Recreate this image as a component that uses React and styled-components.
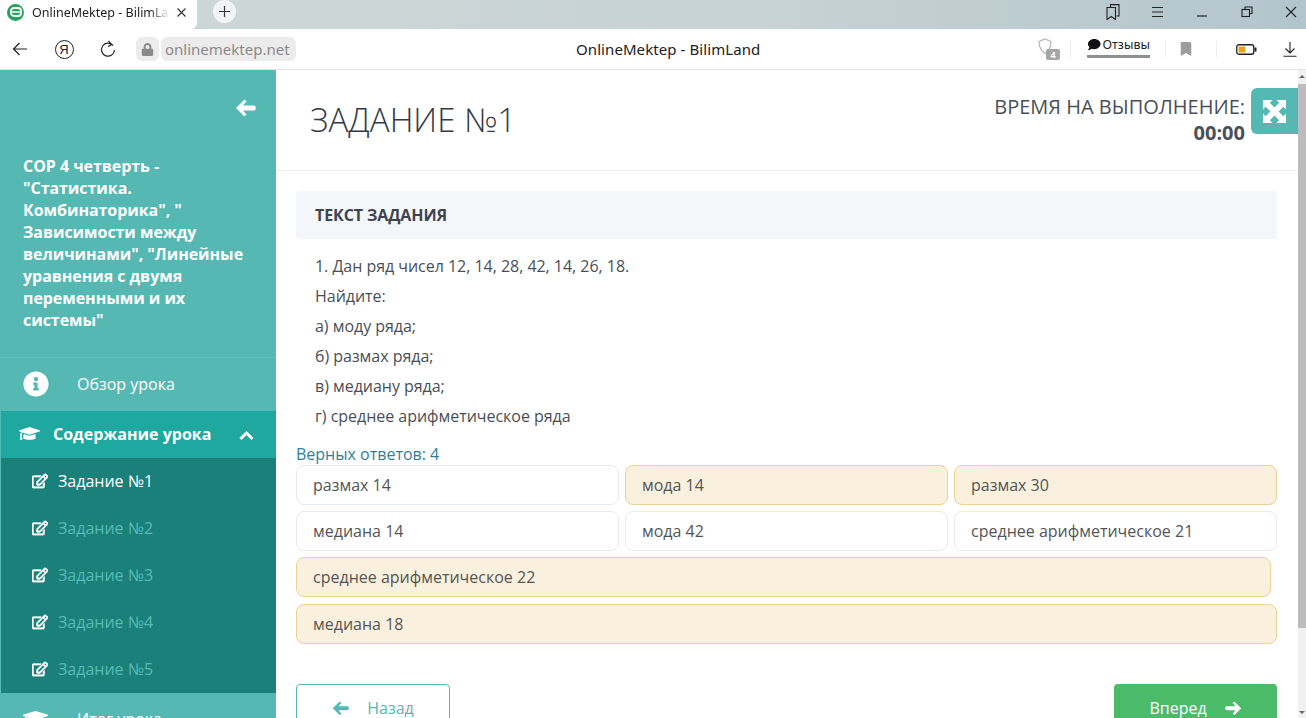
import React from 'react'
import styled, { createGlobalStyle } from 'styled-components'
import {
    FaChevronUp,
    FaGraduationCap,
    FaInfoCircle,
    FaLock,
    FaBookmark,
    FaRegEdit,
    FaComment
} from 'react-icons/fa'

const GlobalStyle = createGlobalStyle`
    html, body {
        margin: 0;
        padding: 0;
        height: 718px;
        overflow: hidden;
        background: #fff;
        font-family: "Open Sans", "Noto Sans", sans-serif;
    }
    * {
        box-sizing: border-box;
    }
`

const tasks = ['Задание №1', 'Задание №2', 'Задание №3', 'Задание №4', 'Задание №5']

const lines = [
    '1. Дан ряд чисел 12, 14, 28, 42, 14, 26, 18.',
    'Найдите:',
    'а) моду ряда;',
    'б) размах ряда;',
    'в) медиану ряда;',
    'г) среднее арифметическое ряда'
]

const answers = [
    { text: 'размах 14' },
    { text: 'мода 14', picked: true },
    { text: 'размах 30', picked: true },
    { text: 'медиана 14' },
    { text: 'мода 42' },
    { text: 'среднее арифметическое 21' },
    { text: 'среднее арифметическое 22', picked: true, wide: true, short: true },
    { text: 'медиана 18', picked: true, wide: true, low: true }
]

// heavy arrow, the Font Awesome 5 one is too thin next to the reference
const BoldArrow = ({ size, right }) => (
    <svg width={size} height={size * 0.86} viewBox="0 0 21 18" style={right ? { transform: 'scaleX(-1)' } : undefined}>
        <path d="M9.500 0.500L11.500 2.500 L8 6.500 H19 Q20.800 6.500 20.800 9 Q20.800 11.500 19 11.500 H8 L11.500 15.500 L9.500 17.500 L1 9z" fill="currentColor" />
    </svg>
)

const ExpandIcon = () => (
    <svg width="23" height="23" viewBox="0 0 23 23" fill="currentColor">
        <path d="M0 0h9.500L6.800 2.700 11.500 7.400 16.200 2.700 13.500 0H23v9.500L20.300 6.800 15.600 11.500 20.300 16.200 23 13.500V23h-9.500l2.700-2.700-4.700-4.700-4.700 4.700L9.500 23H0v-9.500l2.700 2.700 4.700-4.700-4.700-4.700L0 9.500z" />
    </svg>
)

const App = () => {
    return (
        <Page>
            <GlobalStyle />
            <TabBar>
                <Tab>
                    <Favicon>
                        <svg width="12" height="10" viewBox="0 0 12 10">
                            <rect x="1" y="1" width="10" height="8" rx="3" fill="none" stroke="#fff" strokeWidth="1.800" />
                            <path d="M1.500 5h9" stroke="#fff" strokeWidth="1.500" />
                        </svg>
                    </Favicon>
                    <TabTitle>OnlineMektep - BilimLand</TabTitle>
                    <svg width="11" height="11" viewBox="0 0 11 11">
                        <path d="M1.500 1.500l8 8M9.500 1.500l-8 8" stroke="#333" strokeWidth="1.100" />
                    </svg>
                </Tab>
                <NewTab>
                    <svg width="13" height="13" viewBox="0 0 13 13">
                        <path d="M6.500 1v11M1 6.500h11" stroke="#333" strokeWidth="1.200" />
                    </svg>
                </NewTab>
                <WindowControls>
                    <Control>
                        <svg width="14" height="16" viewBox="0 0 14 16" fill="none" stroke="#222" strokeWidth="1.100">
                            <path d="M4.500 3.500V0.600h8.500V12h-2.500" />
                            <path d="M1 3.500h8.500v12L5.200 12.500 1 15.500z" />
                        </svg>
                    </Control>
                    <Control>
                        <svg width="13" height="12" viewBox="0 0 13 12" stroke="#222" strokeWidth="1.100">
                            <path d="M1 1.500h11M1 6h11M1 10.500h11" />
                        </svg>
                    </Control>
                    <Control>
                        <svg width="12" height="12" viewBox="0 0 12 12" stroke="#222" strokeWidth="1.200">
                            <path d="M1 10h10" />
                        </svg>
                    </Control>
                    <Control>
                        <svg width="12" height="12" viewBox="0 0 12 12" fill="none" stroke="#222" strokeWidth="1.100">
                            <path d="M4 3V1h7v6.500H8.500" />
                            <rect x="1" y="3.500" width="7.500" height="7" />
                        </svg>
                    </Control>
                    <Control>
                        <svg width="12" height="12" viewBox="0 0 12 12" stroke="#222" strokeWidth="1.100">
                            <path d="M1 1l10 10M11 1L1 11" />
                        </svg>
                    </Control>
                </WindowControls>
            </TabBar>

            <AddressBar>
                <NavIcons>
                    <svg width="16" height="14" viewBox="0 0 16 14" fill="none" stroke="#222" strokeWidth="1.200">
                        <path d="M15 7H1.500M7.500 1l-6 6 6 6" />
                    </svg>
                    <YandexBadge>Я</YandexBadge>
                    <svg width="16" height="18" viewBox="0 0 16 18" fill="none" stroke="#222" strokeWidth="1.200">
                        <path d="M13 5.500A6.500 6.500 0 1 0 14.500 10" />
                        <path d="M8.500 1l3 3.500-3.500 2" />
                    </svg>
                </NavIcons>
                <LockBox><FaLock size={13} color="#8a8a8a" /></LockBox>
                <UrlBox>onlinemektep.net</UrlBox>
                <PageTitle>OnlineMektep - BilimLand</PageTitle>
                <BarActions>
                    <ShieldIcon>
                        <svg width="16" height="18" viewBox="0 0 16 18" fill="none" stroke="#b5b5b5" strokeWidth="1.200">
                            <path d="M8 1l6 2.500c0 5-1.500 9-6 12-4.500-3-6-7-6-12z" />
                        </svg>
                        <ShieldCount>4</ShieldCount>
                    </ShieldIcon>
                    <Divider />
                    <Feedback>
                        <FeedbackLabel>
                            <FaComment size={13} color="#111" />
                            Отзывы
                        </FeedbackLabel>
                    </Feedback>
                    <Divider />
                    <BookmarkSlot><FaBookmark size={14} color="#9c9c9c" /></BookmarkSlot>
                    <Divider />
                    <BatterySlot>
                        <svg width="21" height="11" viewBox="0 0 21 11">
                            <rect x="0.750" y="0.750" width="17" height="9.500" rx="2" fill="#fff" stroke="#222" strokeWidth="1.300" />
                            <rect x="2.500" y="2.500" width="7" height="6" fill="#e6a817" />
                            <rect x="18.500" y="3.500" width="2" height="4" fill="#222" />
                        </svg>
                    </BatterySlot>
                    <svg width="14" height="15" viewBox="0 0 14 15" fill="none" stroke="#222" strokeWidth="1.100">
                        <path d="M7 0v10.500M2.500 6.500L7 11l4.500-4.500M0.500 14.300h13" />
                    </svg>
                </BarActions>
            </AddressBar>

            <Body>
                <Sidebar>
                    <BackRow><BoldArrow size={21} /></BackRow>
                    <CourseTitle>
                        СОР 4 четверть - "Статистика. Комбинаторика", " Зависимости между величинами", "Линейные уравнения с двумя переменными и их системы"
                    </CourseTitle>
                    <MenuItem>
                        <MenuIcon><FaInfoCircle size={26} /></MenuIcon>
                        Обзор урока
                    </MenuItem>
                    <ActiveMenu>
                        <FaGraduationCap size={21} />
                        <ActiveLabel>Содержание урока</ActiveLabel>
                        <ChevronIcon size={15} />
                    </ActiveMenu>
                    <TaskList>
                        {tasks.map((task, i) => (
                            <TaskRow key={task} current={i === 0}>
                                <EditIcon size={16} />
                                {task}
                            </TaskRow>
                        ))}
                    </TaskList>
                    <MenuItem>
                        <MenuIcon><FaGraduationCap size={25} /></MenuIcon>
                        Итог урока
                    </MenuItem>
                </Sidebar>

                <Main>
                    <Header>
                        <Title>ЗАДАНИЕ №1</Title>
                        <Timer>
                            ВРЕМЯ НА ВЫПОЛНЕНИЕ:
                            <strong>00:00</strong>
                        </Timer>
                        <ExpandButton><ExpandIcon /></ExpandButton>
                    </Header>
                    <Content>
                        <SectionBar>ТЕКСТ ЗАДАНИЯ</SectionBar>
                        <TaskText>
                            {lines.map(line => <p key={line}>{line}</p>)}
                        </TaskText>
                        <CorrectCount>Верных ответов: 4</CorrectCount>
                        <AnswerGrid>
                            {answers.map(a => (
                                <Answer key={a.text} picked={a.picked} wide={a.wide} short={a.short} low={a.low}>
                                    {a.text}
                                </Answer>
                            ))}
                        </AnswerGrid>
                        <Footer>
                            <BackButton>
                                <BoldArrow size={17} />
                                Назад
                            </BackButton>
                            <NextButton>
                                Вперед
                                <BoldArrow size={17} right />
                            </NextButton>
                        </Footer>
                    </Content>
                </Main>
                <Scrollbar>
                    <ScrollArrow />
                    <ScrollThumb />
                    <ScrollArrow down />
                </Scrollbar>
            </Body>
        </Page>
    )
}

export default App

const Page = styled.div`
    width: 1306px;
    height: 718px;
    overflow: hidden;
    display: flex;
    flex-direction: column;
`

const TabBar = styled.div`
    height: 29px;
    flex: none;
    display: flex;
    align-items: flex-start;
    background: linear-gradient(90deg, #d0d8d8 0%, #c6d2d4 60%, #b3c5cc 100%);
`

const Tab = styled.div`
    width: 197px;
    height: 29px;
    padding: 0 8px 5px 7px;
    background: #fff;
    border-bottom-right-radius: 6px;
    display: flex;
    align-items: center;
    color: #222;
    font-size: 12.500px;
`

const Favicon = styled.span`
    width: 17px;
    height: 17px;
    border-radius: 50%;
    background: #27a35f;
    display: flex;
    align-items: center;
    justify-content: center;
    flex: none;
`

const TabTitle = styled.span`
    width: 138px;
    margin: 0 6px 0 8px;
    white-space: nowrap;
    overflow: hidden;
    font-family: "Noto Sans", sans-serif;
    -webkit-mask-image: linear-gradient(90deg, #000 85%, transparent 100%);
    mask-image: linear-gradient(90deg, #000 85%, transparent 100%);
`

const NewTab = styled.span`
    width: 23px;
    height: 23px;
    margin-left: 16px;
    border-radius: 50%;
    background: #f3f5f5;
    display: flex;
    align-items: center;
    justify-content: center;
`

const WindowControls = styled.div`
    margin-left: auto;
    height: 23px;
    padding-right: 7px;
    display: flex;
    align-items: center;
    gap: 28.500px;
`

const Control = styled.span`
    width: 16px;
    display: flex;
    justify-content: center;
`

const AddressBar = styled.div`
    height: 41px;
    flex: none;
    padding: 0 9px 0 12px;
    background: #fff;
    border-bottom: 1px solid #e3e3e3;
    display: flex;
    align-items: center;
    position: relative;
`

const NavIcons = styled.div`
    width: 124px;
    padding-right: 20px;
    display: flex;
    align-items: center;
    justify-content: space-between;
`

const YandexBadge = styled.span`
    width: 19px;
    height: 19px;
    border: 1.200px solid #222;
    border-radius: 50%;
    font-family: "Liberation Sans", sans-serif;
    font-size: 13px;
    color: #222;
    display: flex;
    align-items: center;
    justify-content: center;
`

const LockBox = styled.span`
    width: 23px;
    height: 24px;
    background: #ececec;
    border-radius: 6px;
    display: flex;
    align-items: center;
    justify-content: center;
`

const UrlBox = styled.span`
    height: 24px;
    margin-left: 2px;
    padding: 0 6px 0 4px;
    background: #ececec;
    border-radius: 6px;
    color: #8a8a8a;
    font-family: "Noto Sans", sans-serif;
    font-size: 15px;
    line-height: 24px;
`

const PageTitle = styled.span`
    position: absolute;
    left: 576px;
    color: #222;
    font-family: "Noto Sans", sans-serif;
    font-size: 15px;
    letter-spacing: 0.080px;
`

const BarActions = styled.div`
    margin-left: auto;
    display: flex;
    align-items: center;
`

const ShieldIcon = styled.span`
    width: 24px;
    height: 22px;
    margin-right: 9px;
    position: relative;
    display: block;
`

const ShieldCount = styled.span`
    position: absolute;
    right: 1px;
    bottom: 0;
    width: 14px;
    height: 11px;
    background: #a6a6a6;
    border-radius: 2px;
    color: #fff;
    font-size: 9px;
    font-weight: 700;
    line-height: 11px;
    text-align: center;
`

const Divider = styled.span`
    width: 1px;
    height: 16px;
    background: #ececec;
`

const Feedback = styled.span`
    width: 63px;
    height: 22px;
    margin: 0 15px 5px 16px;
    padding-left: 1px;
    border-bottom: 3px solid #8f8f8f;
    border-radius: 1px;
`

const FeedbackLabel = styled.span`
    display: flex;
    align-items: center;
    gap: 2px;
    color: #222;
    font-family: "Noto Sans", sans-serif;
    font-size: 12.500px;
    line-height: 17px;
`

const BookmarkSlot = styled.span`
    display: flex;
    margin: 0 23px 0 13px;
`

const BatterySlot = styled.span`
    display: flex;
    margin: 0 26px 0 19px;
`

const Body = styled.div`
    flex: 1;
    min-height: 0;
    display: flex;
`

const Sidebar = styled.aside`
    width: 276px;
    flex: none;
    background: #56b8b2;
    color: #fff;
    overflow: hidden;
`

const BackRow = styled.div`
    height: 80px;
    padding: 29px 20px 0 0;
    display: flex;
    justify-content: flex-end;
    align-items: flex-start;
`

const CourseTitle = styled.div`
    height: 208px;
    padding: 5px 20px 0 23px;
    border-bottom: 1px solid #64bdb7;
    font-size: 16px;
    font-weight: 700;
    line-height: 22px;
    letter-spacing: -0.050px;
`

const MenuItem = styled.div`
    height: 53px;
    padding: 0 0 2px 23px;
    display: flex;
    align-items: center;
    font-size: 16px;
`

const MenuIcon = styled.span`
    width: 54px;
    display: flex;
`

const ActiveMenu = styled.div`
    height: 47px;
    margin-left: 1px;
    padding: 0 22px 2px 18px;
    background: #1fa8a0;
    display: flex;
    align-items: center;
`

const ActiveLabel = styled.span`
    flex: 1;
    margin-left: 13px;
    font-size: 16px;
    font-weight: 700;
`

const ChevronIcon = styled(FaChevronUp)`
    stroke: currentColor;
    stroke-width: 30;
    margin-top: 3px;
`

const TaskList = styled.div`
    margin-left: 1px;
    background: #1b7f7a;
`

const TaskRow = styled.div`
    height: 47px;
    padding: 0 0 2px 31px;
    display: flex;
    align-items: center;
    gap: 10px;
    color: ${props => (props.current ? '#fff' : '#58bbb3')};
    font-size: 16px;
`

const EditIcon = styled(FaRegEdit)`
    color: #fff;
    stroke: currentColor;
    stroke-width: 24;
`

const Main = styled.main`
    width: 1022px;
    flex: none;
    background: #fff;
    color: #3d4450;
`

const Header = styled.header`
    height: 101px;
    border-bottom: 1px solid #e8eaee;
    position: relative;
    display: flex;
    justify-content: space-between;
    padding: 25px 53px 0 34px;
`

const Title = styled.h1`
    margin: 0;
    color: #333a46;
    font-size: 33px;
    font-weight: 300;
    line-height: 50px;
`

const Timer = styled.div`
    margin-top: -1px;
    font-size: 20px;
    font-weight: 400;
    line-height: 26px;
    text-align: right;
    color: #4a4f59;

    strong {
        display: block;
        font-weight: 700;
    }
`

const ExpandButton = styled.span`
    position: absolute;
    top: 18px;
    right: 0;
    width: 47px;
    height: 46px;
    background: #56b8b2;
    border-radius: 6px 0 0 6px;
    color: #fff;
    display: flex;
    align-items: center;
    justify-content: center;
`

const Content = styled.div`
    padding: 20px 21px 0 20px;
`

const SectionBar = styled.div`
    height: 48px;
    padding-left: 19px;
    background: #f5f6fa;
    border-radius: 4px;
    font-size: 16px;
    font-weight: 700;
    line-height: 48px;
    letter-spacing: -0.100px;
`

const TaskText = styled.div`
    padding: 12px 19px 0;
    color: #4a4f57;
    font-size: 16px;
    line-height: 30px;
    letter-spacing: -0.030px;

    p {
        margin: 0;
    }
`

const CorrectCount = styled.div`
    margin-top: 12px;
    color: #2f7f98;
    font-size: 16px;
    line-height: 22px;
`

const AnswerGrid = styled.div`
    display: grid;
    grid-template-columns: repeat(3, 1fr);
    gap: 6px;
`

const Answer = styled.div`
    height: 40px;
    padding-left: 16px;
    border: 1px solid ${props => (props.picked ? '#ecd193' : '#e6eaf2')};
    border-radius: 8px;
    background: ${props => (props.picked ? '#f9f1de' : '#fff')};
    color: #555;
    font-size: 16px;
    line-height: 38px;
    grid-column: ${props => (props.wide ? '1 / -1' : 'auto')};
    margin-right: ${props => (props.short ? '6px' : '0')};
    margin-top: ${props => (props.low ? '1px' : '0')};
`

const Footer = styled.div`
    margin-top: 40px;
    display: flex;
    justify-content: space-between;
`

const BackButton = styled.div`
    width: 154px;
    height: 48px;
    border: 1px solid #56b8b2;
    border-radius: 4px;
    color: #56b8b2;
    display: flex;
    align-items: center;
    justify-content: center;
    gap: 18px;
    font-size: 16px;
`

const NextButton = styled.div`
    width: 163px;
    height: 48px;
    background: #4cbb69;
    border-radius: 4px;
    color: #fff;
    display: flex;
    align-items: center;
    justify-content: center;
    gap: 18px;
    font-size: 16px;
`

const Scrollbar = styled.div`
    width: 8px;
    flex: none;
    background: #f1f1f1;
    display: flex;
    flex-direction: column;
    justify-content: space-between;
    position: relative;
`

const ScrollArrow = styled.span`
    position: absolute;
    left: 1px;
    ${props => (props.down ? 'bottom: 4px;' : 'top: 5px;')}
    border-left: 3px solid transparent;
    border-right: 3px solid transparent;
    ${props => (props.down ? 'border-top: 3px solid #666;' : 'border-bottom: 3px solid #666;')}
`

const ScrollThumb = styled.div`
    height: 544px;
    margin-top: 14px;
    background: #bcbcbc;
`
